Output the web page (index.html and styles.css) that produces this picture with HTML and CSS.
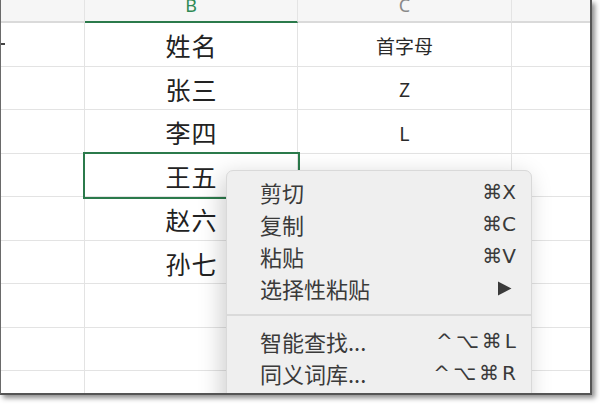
FILE: index.html
```html
<!DOCTYPE html>
<html lang="zh">
<head>
<meta charset="utf-8">
<title>表格</title>
<link rel="stylesheet" href="styles.css">
</head>
<body>
<div class="frame">
  <div class="sheet">
    <div class="hd"></div>
    <div class="hd hd-active">B</div>
    <div class="hd">C</div>
    <div class="hd hd-last"></div>

    <div class="cell cell-stub"></div>
    <div class="cell big">姓名</div>
    <div class="cell small">首字母</div>
    <div class="cell last"></div>

    <div class="cell"></div>
    <div class="cell big">张三</div>
    <div class="cell small">Z</div>
    <div class="cell last"></div>

    <div class="cell"></div>
    <div class="cell big">李四</div>
    <div class="cell small">L</div>
    <div class="cell last"></div>

    <div class="cell"></div>
    <div class="cell big selected">王五</div>
    <div class="cell small">W</div>
    <div class="cell last"></div>

    <div class="cell"></div>
    <div class="cell big">赵六</div>
    <div class="cell small">Z</div>
    <div class="cell last"></div>

    <div class="cell"></div>
    <div class="cell big">孙七</div>
    <div class="cell small">S</div>
    <div class="cell last"></div>

    <div class="cell"></div>
    <div class="cell"></div>
    <div class="cell"></div>
    <div class="cell last"></div>

    <div class="cell"></div>
    <div class="cell"></div>
    <div class="cell"></div>
    <div class="cell last"></div>

    <div class="cell"></div>
    <div class="cell"></div>
    <div class="cell"></div>
    <div class="cell last"></div>
  </div>

  <div class="menu">
    <div class="item"><span>剪切</span><span class="key">⌘X</span></div>
    <div class="item"><span>复制</span><span class="key">⌘C</span></div>
    <div class="item"><span>粘贴</span><span class="key">⌘V</span></div>
    <div class="item"><span>选择性粘贴</span><svg class="arrow" width="15" height="15" viewBox="0 0 15 15"><polygon points="1,0.5 14.5,7.5 1,14.5" fill="#3a3a3a"/></svg></div>
    <div class="sep"></div>
    <div class="item"><span>智能查找...</span><span class="key wide">^⌥⌘L</span></div>
    <div class="item"><span>同义词库...</span><span class="key wide">^⌥⌘R</span></div>
  </div>
</div>
</body>
</html>
```

FILE: styles.css
```css
html, body {
  margin: 0;
  padding: 0;
  background: #ffffff;
}

body {
  width: 600px;
  height: 404px;
  overflow: hidden;
  font-family: "Noto Sans CJK SC", "Noto Sans", "DejaVu Sans", sans-serif;
}

.frame {
  position: relative;
  width: 589px;
  height: 393px;
  border-left: 1px solid #6a6a6a;
  border-right: 2px solid #555555;
  border-bottom: 2px solid #555555;
  box-shadow: 3px 3px 5px rgba(0, 0, 0, 0.45);
  overflow: hidden;
  background: #ffffff;
}

.sheet {
  display: grid;
  grid-template-columns: 84px 213px 214px 78px;
  grid-template-rows: 23px repeat(9, 43.5px);
}

.hd {
  box-sizing: border-box;
  background: #f6f6f6;
  border-right: 1px solid #e4e4e4;
  border-bottom: 2px solid #dadada;
  display: flex;
  justify-content: center;
  align-items: flex-start;
  font-family: "Noto Sans", "DejaVu Sans", sans-serif;
  font-size: 18px;
  line-height: 11px;
  color: #8a8a8a;
}

.hd-active {
  color: #2f8a55;
  border-bottom: 2px solid #2b7a4b;
}

.hd-last {
  border-right: none;
}

.cell {
  box-sizing: border-box;
  border-right: 1px solid #e3e3e3;
  border-bottom: 1px solid #e3e3e3;
  display: flex;
  justify-content: center;
  align-items: center;
  padding-top: 2px;
  color: #222222;
  background: #ffffff;
}

.cell.last {
  border-right: none;
}

.big {
  font-size: 25px;
  letter-spacing: 1px;
  text-indent: 1px;
}

.small {
  font-size: 19px;
  color: #2a2a2a;
}

.selected {
  position: relative;
  z-index: 1;
  outline: 2px solid #2b7a4b;
  outline-offset: 0;
}

.cell-stub {
  position: relative;
}

.cell-stub::before {
  content: "";
  position: absolute;
  left: 0;
  top: 20px;
  width: 4px;
  height: 2px;
  background: #444444;
}

.menu {
  position: absolute;
  left: 225px;
  top: 170px;
  width: 304px;
  height: 260px;
  box-sizing: content-box;
  padding-top: 5px;
  background: #efefef;
  border: 1px solid #d9d9d9;
  border-radius: 7px;
  box-shadow: -4px 6px 24px rgba(0, 0, 0, 0.2);
  z-index: 5;
  color: #3a3a3a;
}

.item {
  height: 32px;
  display: flex;
  align-items: center;
  justify-content: space-between;
  padding: 0 15px 0 33px;
  font-size: 22px;
}

.key {
  font-family: "DejaVu Sans", "Noto Sans", sans-serif;
  font-size: 20px;
  color: #3a3a3a;
}

.key.wide {
  letter-spacing: 3px;
  margin-right: -3px;
}

.arrow {
  margin-right: 4px;
  flex: none;
}

.sep {
  height: 2px;
  background: #dadada;
  margin: 10px 0 9px;
}
```
